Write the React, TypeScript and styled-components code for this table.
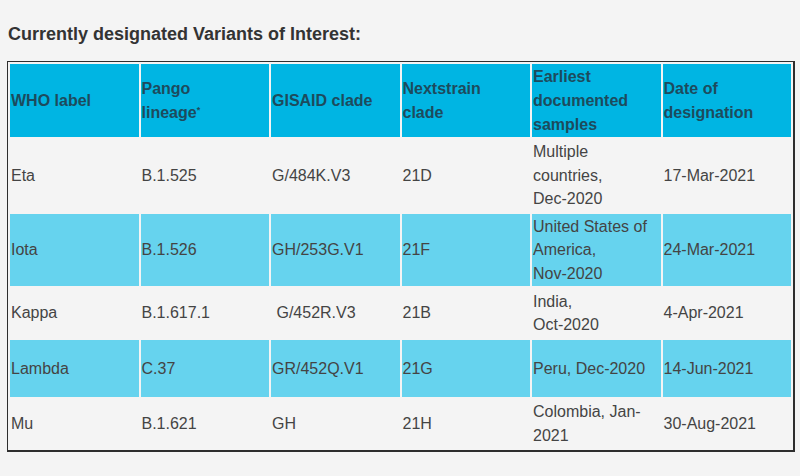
import React from 'react';
import styled, {createGlobalStyle} from 'styled-components';

type Row = {
    label: string;
    pango: string;
    gisaid: string;
    clade: string;
    samples: string[];
    date: string;
    height: number;
}

const rows: Row[] = [
    {label: 'Eta', pango: 'B.1.525', gisaid: 'G/484K.V3', clade: '21D', samples: ['Multiple', 'countries,', 'Dec-2020'], date: '17-Mar-2021', height: 73},
    {label: 'Iota', pango: 'B.1.526', gisaid: 'GH/253G.V1', clade: '21F', samples: ['United States of', 'America,', 'Nov-2020'], date: '24-Mar-2021', height: 72},
    {label: 'Kappa', pango: 'B.1.617.1', gisaid: '\u00a0G/452R.V3', clade: '21B', samples: ['India,', 'Oct-2020'], date: '4-Apr-2021', height: 50},
    {label: 'Lambda', pango: 'C.37', gisaid: 'GR/452Q.V1', clade: '21G', samples: ['Peru, Dec-2020'], date: '14-Jun-2021', height: 57},
    {label: 'Mu', pango: 'B.1.621', gisaid: 'GH', clade: '21H', samples: ['Colombia, Jan-', '2021'], date: '30-Aug-2021', height: 49},
];

const lines = (parts: string[]) =>
    parts.map((p, i) => (
        <React.Fragment key={i}>
            {i > 0 && <br/>}
            {p}
        </React.Fragment>
    ));

const App: React.FC = () => {
    return (
        <Page>
            <GlobalStyle/>
            <Title>Currently designated Variants of Interest:</Title>
            <Table>
                <thead>
                <HeadRow>
                    <Th>WHO label</Th>
                    <Th>Pango<br/>lineage<Sup>*</Sup></Th>
                    <Th>GISAID clade</Th>
                    <Th>Nextstrain<br/>clade</Th>
                    <Th>Earliest<br/>documented<br/>samples</Th>
                    <Th>Date of<br/>designation</Th>
                </HeadRow>
                </thead>
                <tbody>
                {rows.map((r, i) => (
                    <BodyRow key={r.label} $shaded={i % 2 === 1} $h={r.height}>
                        <Td>{r.label}</Td>
                        <Td>{r.pango}</Td>
                        <Td>{r.gisaid}</Td>
                        <Td>{r.clade}</Td>
                        <Td>{lines(r.samples)}</Td>
                        <Td>{r.date}</Td>
                    </BodyRow>
                ))}
                </tbody>
            </Table>
        </Page>
    );
}

export default App;

const GlobalStyle = createGlobalStyle`
  html, body {
    margin: 0;
    background: #f4f4f4;
  }
  body {
    font-family: 'Liberation Sans', Arial, sans-serif;
  }
`;

const Page = styled.div`
  padding: 22px 5px 25px 7px;
  width: 800px;
  height: 476px;
  box-sizing: border-box;
`;

const Title = styled.h3`
  margin: 0 0 15px 1px;
  font-size: 18px;
  line-height: 24px;
  font-weight: bold;
  color: #333;
`;

const Table = styled.table`
  width: 788px;
  border-collapse: separate;
  border-spacing: 2px;
  border-style: solid;
  border-color: #2e2e2e;
  border-width: 1px 2px 2px 1px;
  table-layout: fixed;
  font-size: 16px;
`;

const HeadRow = styled.tr`
  height: 73px;
`;

const Th = styled.th`
  background: #00b5e3;
  color: #1d4b5d;
  font-weight: bold;
  text-align: left;
  vertical-align: middle;
  line-height: 24px;
  padding: 0 1px;
`;

const Sup = styled.sup`
  font-size: 9px;
  vertical-align: 5px;
  line-height: 0;
`;

const BodyRow = styled.tr<{ $shaded: boolean; $h: number }>`
  height: ${p => p.$h}px;
  background: ${p => (p.$shaded ? '#66d3ee' : '#f4f4f4')};
`;

const Td = styled.td`
  color: #444;
  line-height: 23.5px;
  vertical-align: middle;
  padding: 0 1px;
`;
